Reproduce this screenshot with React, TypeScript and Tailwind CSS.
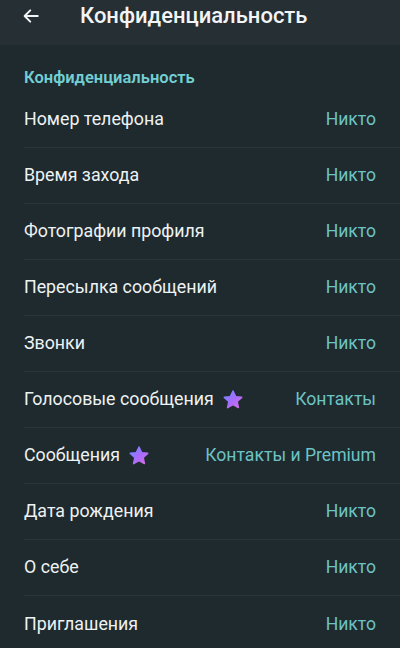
import React from 'react';

type Row = { label: string; value: string; star?: boolean };

const rows: Row[] = [
  { label: 'Номер телефона', value: 'Никто' },
  { label: 'Время захода', value: 'Никто' },
  { label: 'Фотографии профиля', value: 'Никто' },
  { label: 'Пересылка сообщений', value: 'Никто' },
  { label: 'Звонки', value: 'Никто' },
  { label: 'Голосовые сообщения', value: 'Контакты', star: true },
  { label: 'Сообщения', value: 'Контакты и Premium', star: true },
  { label: 'Дата рождения', value: 'Никто' },
  { label: 'О себе', value: 'Никто' },
  { label: 'Приглашения', value: 'Никто' },
];

function PremiumStar() {
  return (
    <svg width="22" height="22" viewBox="0 0 24 24" className="ml-2 shrink-0">
      <defs>
        <linearGradient id="starGrad" x1="0" y1="0" x2="1" y2="1">
          <stop offset="0%" stopColor="#6b8bff" />
          <stop offset="50%" stopColor="#a66cff" />
          <stop offset="100%" stopColor="#d66fe0" />
        </linearGradient>
      </defs>
      <path
        d="M12 2.2l2.9 6.1 6.6.8-4.9 4.6 1.3 6.6L12 17l-5.9 3.3 1.3-6.6-4.9-4.6 6.6-.8z"
        fill="url(#starGrad)"
        stroke="url(#starGrad)"
        strokeWidth="1.6"
        strokeLinejoin="round"
      />
    </svg>
  );
}

export default function App() {
  return (
    <div className="w-[400px] h-[648px] overflow-hidden bg-[#1f2a2f] text-[#eef2f3] font-['Roboto',sans-serif]">
      <div className="h-[45px] bg-[#262f34] flex items-start pt-[2px]">
        <div className="w-[80px] h-[28px] flex items-center pl-[22px]">
          <svg width="18" height="18" viewBox="0 0 24 24" fill="none" stroke="#f2f4f5" strokeWidth="2.6" strokeLinecap="round" strokeLinejoin="round">
            <path d="M21 12H4M11 4.5L3.5 12l7.5 7.5" />
          </svg>
        </div>
        <h1 className="text-[22px] font-medium leading-[28px] text-[#f2f4f5]">Конфиденциальность</h1>
      </div>

      <div className="pl-6">
        <div className="h-[47px] flex items-end pb-[1px] text-[16.5px] font-semibold text-[#72cfd3]">
          Конфиденциальность
        </div>
        <div>
          {rows.map((r, i) => (
            <div
              key={i}
              className={`h-[56px] flex items-center pr-6 ${i < rows.length - 1 ? 'border-b border-[#2b363b]' : ''}`}
            >
              <span className="text-[17.8px] text-[#eef2f3]">{r.label}</span>
              {r.star && <PremiumStar />}
              <span className="ml-auto text-[17.6px] text-[#6cc3c4]">{r.value}</span>
            </div>
          ))}
        </div>
      </div>
    </div>
  );
}
